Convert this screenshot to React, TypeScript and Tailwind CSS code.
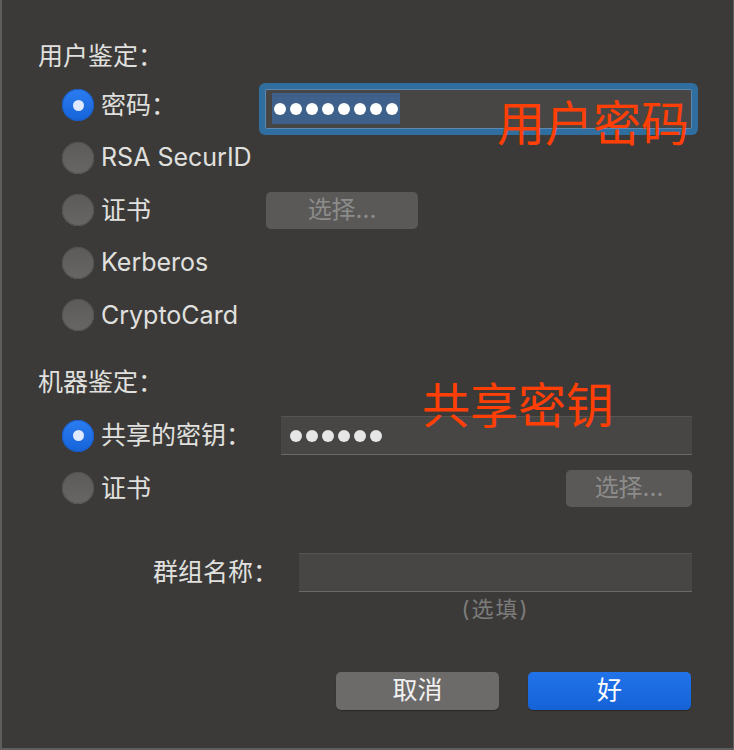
import React from "react";

const FONT = "font-[Inter,'Noto_Sans_CJK_SC',sans-serif]";

function Radio({ checked = false }: { checked?: boolean }) {
  if (checked) {
    return (
      <span className="w-[32px] h-[32px] shrink-0 rounded-full bg-linear-to-b from-[#2c7df2] to-[#1563d9] flex items-center justify-center shadow-[inset_0_0_0_1px_#1a5cc4]">
        <span className="w-[11px] h-[11px] rounded-full bg-[#dfe9ff]" />
      </span>
    );
  }
  return (
    <span className="w-[32px] h-[32px] shrink-0 rounded-full bg-linear-to-b from-[#5c5b5a] to-[#676665] shadow-[inset_0_0_0_1px_#545352,inset_0_-1px_0_#727170]" />
  );
}

function Dots({ n, color }: { n: number; color: string }) {
  return (
    <div className="flex items-center gap-[4px]">
      {Array.from({ length: n }).map((_, i) => (
        <span key={i} className={`w-[12px] h-[12px] rounded-full ${color}`} />
      ))}
    </div>
  );
}

function SelectButton({ wide }: { wide?: boolean }) {
  return (
    <div
      className={`${wide ? "w-[152px]" : "w-[126px]"} h-[37px] rounded-[5px] bg-[#5a5958] text-[#8c8c8b] text-[24px] flex items-center justify-center`}
    >
      选择...
    </div>
  );
}

function Row({
  checked,
  label,
  labelWidth = "w-[203px]",
  children,
}: {
  checked?: boolean;
  label: string;
  labelWidth?: string;
  children?: React.ReactNode;
}) {
  return (
    <div className="h-[52.5px] flex items-center">
      <div className={`${labelWidth} shrink-0 flex items-center gap-[7px]`}>
        <Radio checked={checked} />
        <span className="whitespace-nowrap leading-none">{label}</span>
      </div>
      {children && <div className="flex-1 flex items-center">{children}</div>}
    </div>
  );
}

function TextField({ children }: { children?: React.ReactNode }) {
  return (
    <div className="flex-1 h-[39px] bg-[#474645] border-t border-[#555453] border-b border-b-[#6b6a69] flex items-center px-[9px]">
      {children}
    </div>
  );
}

export default function App() {
  return (
    <div
      className={`relative w-[734px] h-[750px] overflow-hidden bg-[#3b3a39] border-l-2 border-r border-b-2 border-[#5e5e5e] text-[#e0e0df] text-[25px] ${FONT}`}
    >
      <div className="pl-[36px] pr-[41px] pt-[41px] flex flex-col">
        <div className="h-[32px] flex items-center">用户鉴定：</div>
        <div className="mt-[6px] ml-[24px] flex flex-col">
          <Row checked label="密码：">
            <div className="mt-[7px] flex-1 h-[40px] rounded-[2px] shadow-[0_0_0_6px_#2f6e9e] bg-[#474645] border border-[#5a88b0] flex items-center px-[6px]">
              <div className="h-[31px] px-[2px] bg-[#3f608a] flex items-center">
                <Dots n={8} color="bg-white" />
              </div>
            </div>
          </Row>
          <Row label="RSA SecurID" />
          <Row label="证书">
            <div className="ml-px">
              <SelectButton wide />
            </div>
          </Row>
          <Row label="Kerberos" />
          <Row label="CryptoCard" />
        </div>

        <div className="mt-[25px] h-[32px] flex items-center">机器鉴定：</div>
        <div className="mt-[11px] ml-[24px] flex flex-col">
          <Row checked label="共享的密钥：" labelWidth="w-[219px]">
            <TextField>
              <Dots n={6} color="bg-[#e6e6e6]" />
            </TextField>
          </Row>
          <Row label="证书">
            <div className="ml-auto">
              <SelectButton />
            </div>
          </Row>
        </div>

        <div className="mt-[38.5px] flex items-center">
          <div className="w-[240px] text-right whitespace-nowrap">群组名称：</div>
          <div className="ml-[21px] flex-1 flex flex-col">
            <div className="h-[39px] flex">
              <TextField />
            </div>
          </div>
        </div>
        <div className="mt-[5px] h-[24px] pl-[261px] flex justify-center text-[22px] tracking-[2px] text-[#7c7c7b] leading-[24px]">
          (选填)
        </div>

        <div className="mt-[51px] flex justify-end gap-[29px] pr-px">
          <div className="w-[163px] h-[38px] rounded-[5px] bg-[#6c6b6a] text-[#f2f2f2] flex items-center justify-center shadow-[0_1px_1px_rgba(0,0,0,0.3)]">
            取消
          </div>
          <div className="w-[163px] h-[38px] rounded-[5px] bg-linear-to-b from-[#2173ea] to-[#1562d6] text-white flex items-center justify-center shadow-[0_1px_1px_rgba(0,0,0,0.3)]">
            好
          </div>
        </div>
      </div>

      <div className="absolute left-[495px] top-[96px] text-[48px] leading-none text-[#ff3f05] font-['Noto_Sans_CJK_SC',sans-serif] whitespace-nowrap">
        用户密码
      </div>
      <div className="absolute left-[420px] top-[378px] text-[48px] leading-none text-[#ff3f05] font-['Noto_Sans_CJK_SC',sans-serif] whitespace-nowrap">
        共享密钥
      </div>
    </div>
  );
}
